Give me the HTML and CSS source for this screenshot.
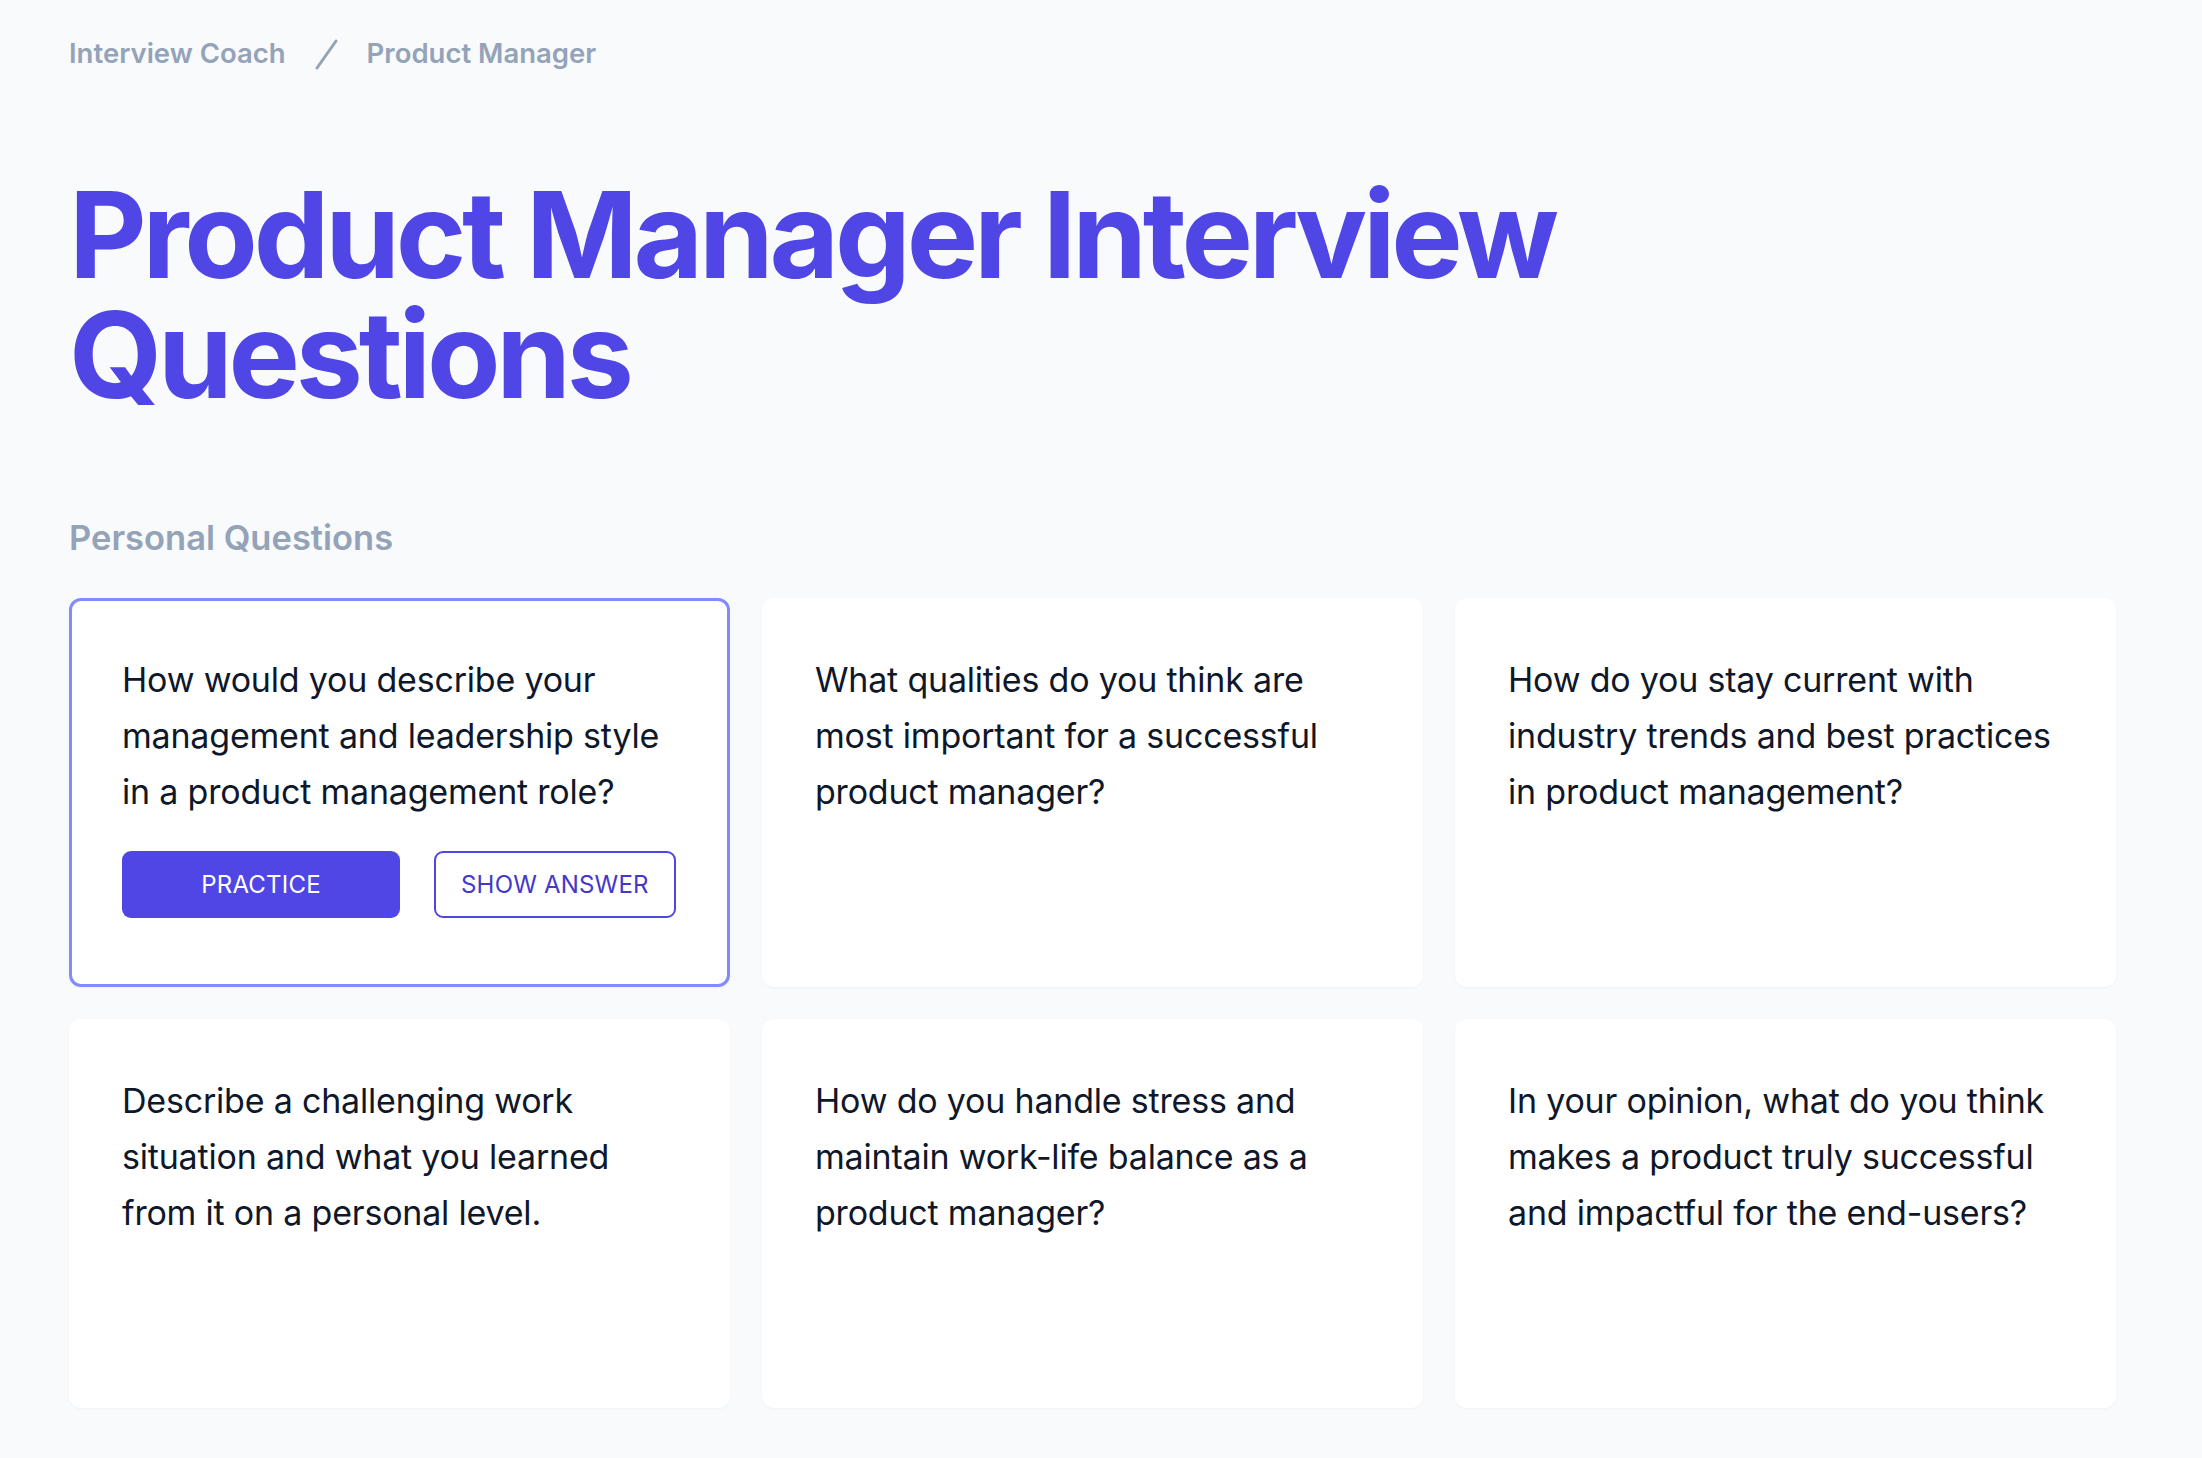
FILE: index.html
```html
<!DOCTYPE html>
<html lang="en">
<head>
<meta charset="UTF-8">
<meta name="viewport" content="width=device-width, initial-scale=1.0">
<title>Product Manager Interview Questions</title>
<link rel="stylesheet" href="styles.css">
</head>
<body>

  <div class="page">
    <nav class="crumbs">
      <a href="#">Interview Coach</a>
      <svg class="slash" width="23" height="31" viewBox="0 0 23 31">
        <line x1="2" y1="29" x2="21" y2="2" stroke="#94a3b8" stroke-width="3" stroke-linecap="round"/>
      </svg>
      <a href="#">Product Manager</a>
    </nav>

    <h1 class="title">Product Manager Interview Questions</h1>

    <h2 class="section">Personal Questions</h2>

    <div class="grid">
      <div class="card active">
        <p>How would you describe your management and leadership style in a product management role?</p>
        <div class="actions">
          <button class="btn practice">PRACTICE</button>
          <button class="btn answer">SHOW ANSWER</button>
        </div>
      </div>
      <div class="card">
        <p>What qualities do you think are most important for a successful product manager?</p>
      </div>
      <div class="card">
        <p>How do you stay current with industry trends and best practices in product management?</p>
      </div>
      <div class="card">
        <p>Describe a challenging work situation and what you learned from it on a personal level.</p>
      </div>
      <div class="card">
        <p>How do you handle stress and maintain work-life balance as a product manager?</p>
      </div>
      <div class="card">
        <p>In your opinion, what do you think makes a product truly successful and impactful for the end-users?</p>
      </div>
    </div>
  </div>

</body>
</html>
```

FILE: styles.css
```css
* {
  box-sizing: border-box;
}

body {
  margin: 0;
  background-color: #f8fafc;
  font-family: Inter, "Noto Sans", sans-serif;
  color: #0f172a;
}

.page {
  width: 2116px;
  padding: 33px 0 60px 69px;
}

.crumbs {
  display: flex;
  align-items: center;
  gap: 29px;
  height: 40px;
  font-size: 27.5px;
  font-weight: 600;
  color: #94a3b8;
}

.crumbs a {
  color: #94a3b8;
  text-decoration: none;
}

.crumbs .slash {
  display: block;
  margin-top: 2px;
}

.title {
  margin: 102px 0 0 0;
  max-width: 1560px;
  font-size: 120px;
  line-height: 120px;
  font-weight: 700;
  letter-spacing: -4.2px;
  color: #4f46e5;
}

.section {
  margin: 99px 0 0 0;
  font-size: 34.5px;
  line-height: 48px;
  font-weight: 600;
  color: #94a3b8;
}

.grid {
  margin-top: 36px;
  display: grid;
  grid-template-columns: repeat(3, 1fr);
  grid-auto-rows: 1fr;
  gap: 32px;
}

.card {
  background: white;
  border: 3px solid transparent;
  border-radius: 12px;
  padding: 51px 40px 66px 50px;
  box-shadow: 0 1px 3px rgba(15, 23, 42, 0.04);
}

.card.active {
  border-color: #818cf8;
}

.card p {
  margin: 0;
  font-size: 34px;
  line-height: 56px;
  letter-spacing: -0.2px;
}

.actions {
  display: flex;
  gap: 34px;
  margin-top: 31px;
}

.btn {
  height: 67px;
  border-radius: 9px;
  font-family: Inter, sans-serif;
  font-size: 24px;
  font-weight: 400;
  letter-spacing: 0.2px;
  white-space: nowrap;
  cursor: pointer;
}

.practice {
  width: 278px;
  background: #4f46e5;
  border: none;
  color: white;
}

.answer {
  padding: 0 25px;
  background: white;
  border: 2px solid #4f46e5;
  color: #4338ca;
}
```
